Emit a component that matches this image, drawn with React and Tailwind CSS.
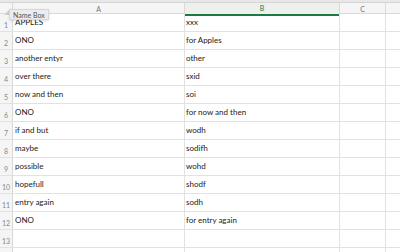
import React from "react";

const rows = [
  ["APPLES", "xxx"],
  ["ONO", "for Apples"],
  ["another entyr", "other"],
  ["over there", "sxid"],
  ["now and then", "soi"],
  ["ONO", "for now and then"],
  ["if and but", "wodh"],
  ["maybe", "sodifh"],
  ["possible", "wohd"],
  ["hopefull", "shodf"],
  ["entry again", "sodh"],
  ["ONO", "for entry again"],
  ["", ""],
  ["", ""],
];

export default function App() {
  return (
    <div
      className="relative w-[400px] h-[252px] overflow-hidden bg-white text-[8px] text-[#222]"
      style={{ fontFamily: "Lato, 'Open Sans', sans-serif" }}
    >
      <div className="h-[3px] bg-[#e8e8e8] border-b border-[#d4d4d4]" />
      <div className="grid grid-cols-[13px_172px_155px_46px_1fr] h-[11px] bg-[#f5f5f5] border-b border-[#dadada] text-[#777] text-[7px]">
        <div className="border-r border-[#dadada] relative">
          <div className="absolute right-[1px] bottom-[1px] w-0 h-0 border-l-[7px] border-l-transparent border-b-[7px] border-b-[#cfcfcf]" />
        </div>
        <div className="border-r border-[#dadada] flex items-center justify-center">A</div>
        <div className="border-r border-[#dadada] flex items-center justify-center text-[#1e7a44] bg-[#eef0ee] border-b-2 border-b-[#1e7a44]">B</div>
        <div className="border-r border-[#dadada] flex items-center justify-center">C</div>
        <div />
      </div>
      {rows.map((r, i) => (
        <div key={i} className="grid grid-cols-[13px_172px_155px_46px_1fr] h-[18px] border-b border-[#e2e2e2]">
          <div className="bg-[#f5f5f5] border-r border-[#d8d8d8] text-[#888] text-[7px] flex items-end justify-center pb-[1px]">{i + 1}</div>
          <div className="border-r border-[#e2e2e2] pl-[2px] pt-[4px] leading-[9px]">{r[0]}</div>
          <div className="border-r border-[#e2e2e2] pl-[1px] pt-[4px] leading-[9px]">{r[1]}</div>
          <div className="border-r border-[#e2e2e2]" />
          <div />
        </div>
      ))}
      <div className="absolute left-[9px] top-[9px] px-[3px] h-[11px] leading-[11px] bg-[#ececec] border border-[#d8d8d8] text-[7px] text-[#555] shadow-sm">
        Name Box
      </div>
    </div>
  );
}
